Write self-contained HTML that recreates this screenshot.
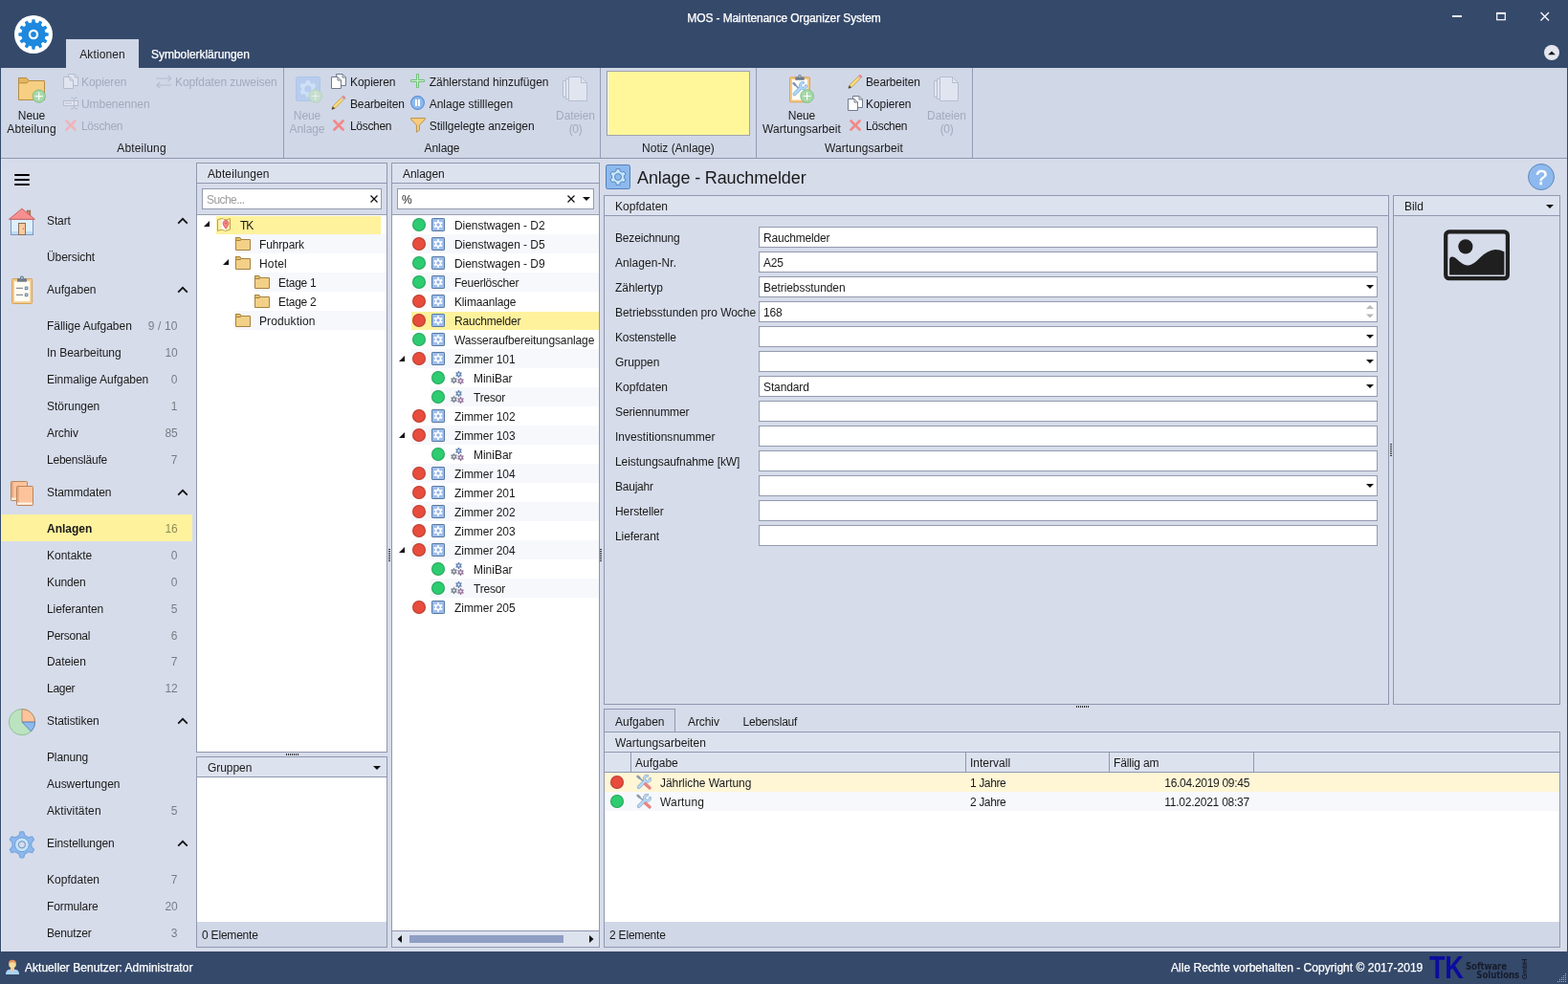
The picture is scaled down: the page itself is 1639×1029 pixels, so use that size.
<!DOCTYPE html>
<html lang="de"><head><meta charset="utf-8"><title>MOS - Maintenance Organizer System</title>
<style>
html,body{margin:0;padding:0;}
body{width:1639px;height:1029px;overflow:hidden;position:relative;background:#35496A;font-family:"Liberation Sans",sans-serif;font-size:12px;line-height:18px;color:#1a1a1a;}
.b{position:absolute;display:block;line-height:0;}
.bb{box-sizing:border-box;}
.t{position:absolute;white-space:nowrap;}
.w{color:#fff;-webkit-text-stroke:0.25px #fff;}
.d{width:14px;height:14px;border-radius:50%;box-shadow:inset 0 0 0 1px rgba(0,0,0,.2);}
svg{display:block;}
#w{position:absolute;left:0;top:0;width:1639px;height:1029px;will-change:transform;}
</style></head><body><div id="w">
<div class="t w" style="left:718.3px;top:10px;letter-spacing:-0.11px;">MOS - Maintenance Organizer System</div>
<div class="b" style="left:15px;top:16px;"><svg width="40" height="40" viewBox="0 0 40 40"><circle cx="20" cy="20" r="20" fill="#fff"/><path d="M32.5,18.1L35.7,18.5L35.7,21.5L32.5,21.9L31.7,24.6L34.4,26.5L32.8,29.2L29.8,27.9L27.9,29.8L29.2,32.8L26.5,34.4L24.6,31.7L21.9,32.5L21.5,35.7L18.5,35.7L18.1,32.5L15.4,31.7L13.5,34.4L10.8,32.8L12.1,29.8L10.2,27.9L7.2,29.2L5.6,26.5L8.3,24.6L7.5,21.9L4.3,21.5L4.3,18.5L7.5,18.1L8.3,15.4L5.6,13.5L7.2,10.8L10.2,12.1L12.1,10.2L10.8,7.2L13.5,5.6L15.4,8.3L18.1,7.5L18.5,4.3L21.5,4.3L21.9,7.5L24.6,8.3L26.5,5.6L29.2,7.2L27.9,10.2L29.8,12.1L32.8,10.8L34.4,13.5L31.7,15.4Z" fill="#1E88DE"/><circle cx="20" cy="20" r="5.2" fill="#fff"/><circle cx="20" cy="20" r="2.9" fill="#1E88DE"/></svg></div>
<svg class="b" style="left:1500px;top:0" width="139" height="36" viewBox="0 0 139 36"><path d="M18,17 H28" stroke="#fff" stroke-width="1.8"/><rect x="64.7" y="13.9" width="8.6" height="6.8" fill="none" stroke="#fff" stroke-width="1.2"/><path d="M64.1,13.8 H73.9" stroke="#fff" stroke-width="1.8"/><path d="M110.5,13 L119,21.5 M119,13 L110.5,21.5" stroke="#fff" stroke-width="1.3"/></svg>
<svg class="b" style="left:1614px;top:47px" width="16" height="16" viewBox="0 0 16 16"><circle cx="8" cy="8" r="8" fill="#E4E7EF"/><path d="M4.2,10.2 L8,6.4 L11.8,10.2Z" fill="#111"/></svg>
<div class="b" style="left:69px;top:41px;width:76px;height:31px;background:#D0D7E7;"></div>
<div class="t" style="left:83.23px;top:48px;letter-spacing:0.11px;">Aktionen</div>
<div class="t w" style="left:158.12px;top:48px;letter-spacing:-0.04px;">Symbolerklärungen</div>
<div class="b" style="left:1px;top:71px;width:1637px;height:94px;background:#D0D7E7;"></div>
<div class="b" style="left:1px;top:165px;width:1637px;height:1px;background:#8F98B1;"></div>
<div class="b" style="left:296px;top:71px;width:1px;height:94px;background:#939CB6;"></div>
<div class="b" style="left:627px;top:71px;width:1px;height:94px;background:#939CB6;"></div>
<div class="b" style="left:790px;top:71px;width:1px;height:94px;background:#939CB6;"></div>
<div class="b" style="left:1016px;top:71px;width:1px;height:94px;background:#939CB6;"></div>
<div class="b" style="left:19px;top:81px;"><svg width="30" height="28" viewBox="0 0 30 28"><path d="M0.5,0.5 H8.5 L11.5,3.5 H27.5 V23.5 H0.5Z" fill="#F6CF82" stroke="#B58C44" stroke-width="1" stroke-linejoin="round"/><path d="M0.5,0.5 H8.5 L11.5,3.5 L9,5.8 H0.5Z" fill="#E6B55E" stroke="#B58C44" stroke-width="1" stroke-linejoin="round"/><circle cx="21.7" cy="19.6" r="6.6" fill="#A8D8AB" stroke="#7CC283" stroke-width="1"/><path d="M17.7,19.6 H25.7 M21.7,15.600000000000001 V23.6" stroke="#fff" stroke-width="1.2" fill="none"/></svg></div>
<div class="t" style="left:18.85px;top:112px;letter-spacing:-0.10px;">Neue</div>
<div class="t" style="left:7.22px;top:126px;letter-spacing:0.17px;">Abteilung</div>
<div class="b" style="left:66px;top:77px;"><svg width="16" height="16" viewBox="0 0 16 16"><path d="M5.5,0.5 H12 L15.5,4 V12.5 H5.5Z" fill="#E1E5F0" stroke="#B4BCCF" stroke-width="1" stroke-linejoin="round"/><path d="M12,0.5 V4 H15.5" fill="none" stroke="#B4BCCF" stroke-width="1" stroke-linejoin="round"/><path d="M0.5,3.5 H7 L10.5,7 V15.5 H0.5Z" fill="#E1E5F0" stroke="#B4BCCF" stroke-width="1" stroke-linejoin="round"/><path d="M7,3.5 V7 H10.5" fill="none" stroke="#B4BCCF" stroke-width="1" stroke-linejoin="round"/></svg></div>
<div class="t" style="left:85px;top:77px;color:#A2AABD;letter-spacing:-0.07px;">Kopieren</div>
<div class="b" style="left:66px;top:101px;"><svg width="16" height="14" viewBox="0 0 16 14"><rect x="0.5" y="4.5" width="15" height="5" fill="#E1E5F0" stroke="#B4BCCF"/><rect x="2" y="6" width="7" height="2" fill="#CDD3E2"/><path d="M8,1 Q11.5,1 11.5,3 Q11.5,1 15,1 M8,13 Q11.5,13 11.5,11 Q11.5,13 15,13 M11.5,2.5 V11.5" stroke="#B4BCCF" fill="none" stroke-width="1"/></svg></div>
<div class="t" style="left:85px;top:100px;color:#A2AABD;letter-spacing:-0.05px;">Umbenennen</div>
<div class="b" style="left:68px;top:125px;"><svg width="12" height="12" viewBox="0 0 12 12"><path d="M1.5,1.5 L10.5,10.5 M10.5,1.5 L1.5,10.5" stroke="#F0B4BA" stroke-width="2.6" stroke-linecap="round" fill="none"/></svg></div>
<div class="t" style="left:85px;top:123px;color:#A2AABD;letter-spacing:-0.32px;">Löschen</div>
<div class="b" style="left:163px;top:78px;"><svg width="17" height="15" viewBox="0 0 17 15"><path d="M0.5,4 H15.5 M12.5,0.8 L15.7,4 L12.5,7.2" stroke="#B4BCCF" fill="none" stroke-width="1.1"/><path d="M16,11 H1 M4,7.8 L0.8,11 L4,14.2" stroke="#B4BCCF" fill="none" stroke-width="1.1"/></svg></div>
<div class="t" style="left:183px;top:77px;color:#A2AABD;letter-spacing:-0.08px;">Kopfdaten zuweisen</div>
<div class="t" style="left:122.22px;top:146px;letter-spacing:0.17px;">Abteilung</div>
<div class="b" style="left:309px;top:80px;"><svg width="28" height="28" viewBox="0 0 28 28"><rect x="0.5" y="0.5" width="25" height="25" rx="1.5" fill="#B8CDEE" stroke="#AEC5EA"/><path d="M11.2,7.1L11.4,4.8L14.4,4.8L14.6,7.1L17,8.5L19.1,7.6L20.6,10.2L18.7,11.5L18.7,14.3L20.6,15.6L19.1,18.2L17,17.3L14.6,18.7L14.4,21L11.4,21L11.2,18.7L8.8,17.3L6.7,18.2L5.2,15.6L7.1,14.3L7.1,11.5L5.2,10.2L6.7,7.6L8.8,8.5Z" fill="#CFE0F6" stroke="#CFE0F6" stroke-width="1.2" stroke-linejoin="round"/><circle cx="12.9" cy="12.9" r="3.6" fill="#B8CDEE"/><circle cx="20.6" cy="20.5" r="6.8" fill="#C6DDCE" stroke="#B4D3BE" stroke-width="1"/><path d="M16.6,20.5 H24.6 M20.6,16.5 V24.5" stroke="#E4EFE8" stroke-width="1.2" fill="none"/></svg></div>
<div class="t" style="left:306.85px;top:112px;color:#A2AABD;letter-spacing:-0.10px;">Neue</div>
<div class="t" style="left:302.57px;top:126px;color:#A2AABD;letter-spacing:-0.08px;">Anlage</div>
<div class="b" style="left:346px;top:77px;"><svg width="16" height="16" viewBox="0 0 16 16"><path d="M5.5,0.5 H12 L15.5,4 V12.5 H5.5Z" fill="#fff" stroke="#6E7B8C" stroke-width="1" stroke-linejoin="round"/><path d="M12,0.5 V4 H15.5" fill="none" stroke="#6E7B8C" stroke-width="1" stroke-linejoin="round"/><path d="M0.5,3.5 H7 L10.5,7 V15.5 H0.5Z" fill="#fff" stroke="#6E7B8C" stroke-width="1" stroke-linejoin="round"/><path d="M7,3.5 V7 H10.5" fill="none" stroke="#6E7B8C" stroke-width="1" stroke-linejoin="round"/></svg></div>
<div class="t" style="left:366px;top:77px;letter-spacing:-0.07px;">Kopieren</div>
<div class="b" style="left:346px;top:100px;"><svg width="16" height="16" viewBox="0 0 16 16"><path d="M2.6,10.4 L10.4,2.6 L12.6,4.8 L4.8,12.6 L1,14.2Z" fill="#F7DC7C" stroke="#C7A24A" stroke-width="0.9" stroke-linejoin="round"/><path d="M10.4,2.6 L11.4,1.6 L13.6,3.8 L12.6,4.8Z" fill="#F3F0EA" stroke="#B9B4A8" stroke-width="0.7"/><path d="M11.4,1.6 L12.2,0.9 Q13.1,0.2 14,1.1 L14.2,1.3 Q15,2.2 14.3,3 L13.6,3.8Z" fill="#F49C9C" stroke="#D06C6C" stroke-width="0.8"/><path d="M1,14.2 L1.9,11.7 L3.6,13.4Z" fill="#4a3f35" stroke="#4a3f35" stroke-width="0.6" stroke-linejoin="round"/></svg></div>
<div class="t" style="left:366px;top:100px;letter-spacing:-0.13px;">Bearbeiten</div>
<div class="b" style="left:348px;top:125px;"><svg width="12" height="12" viewBox="0 0 12 12"><path d="M1.5,1.5 L10.5,10.5 M10.5,1.5 L1.5,10.5" stroke="#F28888" stroke-width="2.6" stroke-linecap="round" fill="none"/></svg></div>
<div class="t" style="left:366px;top:123px;letter-spacing:-0.32px;">Löschen</div>
<div class="b" style="left:429px;top:77px;"><svg width="15" height="15" viewBox="0 0 15 15"><path d="M6.5,0.5 H8.5 V6.5 H14.5 V8.5 H8.5 V14.5 H6.5 V8.5 H0.5 V6.5 H6.5Z" fill="#CDEFCF" stroke="#6FC176" stroke-width="1" stroke-linejoin="miter"/></svg></div>
<div class="t" style="left:448.7px;top:77px;letter-spacing:-0.03px;">Zählerstand hinzufügen</div>
<div class="b" style="left:429px;top:100px;"><svg width="15" height="15" viewBox="0 0 15 15"><circle cx="7.5" cy="7.5" r="6.9" fill="#8DB9EE" stroke="#5B8FD6" stroke-width="1.1"/><rect x="5" y="4" width="2" height="7" fill="#fff"/><rect x="8" y="4" width="2" height="7" fill="#fff"/></svg></div>
<div class="t" style="left:448.7px;top:100px;letter-spacing:-0.00px;">Anlage stilllegen</div>
<div class="b" style="left:429px;top:123px;"><svg width="16" height="16" viewBox="0 0 16 16"><path d="M0.6,0.6 H15.4 V1.8 L9.4,7.8 V13 L6.4,15.3 V7.8 L0.6,1.8Z" fill="#F9CC7A" stroke="#B9924C" stroke-width="1" stroke-linejoin="round"/></svg></div>
<div class="t" style="left:448.7px;top:123px;letter-spacing:-0.04px;">Stillgelegte anzeigen</div>
<div class="b" style="left:588px;top:80px;"><svg width="26" height="26" viewBox="0 0 26 26"><path d="M0.5,4.5 H4 V21.5 H0.5Z" fill="#E1E5F0" stroke="#B7BED1" stroke-linejoin="round"/><path d="M3.5,2.5 H7 V23.5 H3.5Z" fill="#E1E5F0" stroke="#B7BED1" stroke-linejoin="round"/><path d="M6.5,0.5 H19.5 L25.5,6.5 V25.5 H6.5Z" fill="#E1E5F0" stroke="#B7BED1" stroke-linejoin="round"/><path d="M19.5,0.5 V6.5 H25.5" fill="none" stroke="#B7BED1" stroke-linejoin="round"/></svg></div>
<div class="t" style="left:581.09px;top:112px;color:#A2AABD;letter-spacing:-0.08px;">Dateien</div>
<div class="t" style="left:594.64px;top:126px;color:#A2AABD;letter-spacing:-0.32px;">(0)</div>
<div class="t" style="left:443.57px;top:146px;letter-spacing:-0.08px;">Anlage</div>
<div class="b" style="left:634px;top:74px;width:150px;height:68px;background:#FFF799;border:1px solid #A2A4AC;box-sizing:border-box;border-left-color:#9496A2;box-shadow:inset 1px 0 0 #fff;"></div>
<div class="t" style="left:671.1px;top:146px;letter-spacing:-0.02px;">Notiz (Anlage)</div>
<div class="b" style="left:825px;top:78px;"><svg width="27" height="30" viewBox="0 0 27 30"><rect x="0.5" y="2.8" width="21" height="26" rx="0.8" fill="#F4C887" stroke="#DDA458"/><rect x="3" y="5" width="16" height="21.5" fill="#FFFDF6"/><path d="M6.3,2.6 H15.7 V5.8 H6.3Z" fill="#6E7B8C"/><circle cx="11" cy="1.9" r="1.4" fill="#D2D9E9" stroke="#6E7B8C" stroke-width="1"/><path d="M5.4,10 L10,14.6" stroke="#7F97BC" stroke-width="1.6" stroke-linecap="round" fill="none"/><path d="M4.6,9.2 L6.2,10.8" stroke="#7F97BC" stroke-width="2.6" stroke-linecap="round"/><path d="M12.4,13.4 L5.4,20.4" stroke="#7FB1E3" stroke-width="3.8" stroke-linecap="round"/><path d="M14.4,8.6 A3,3 0 1 0 17.4,11.8" fill="none" stroke="#7FB1E3" stroke-width="3" stroke-linecap="round"/><path d="M12.4,13.4 L5.4,20.4" stroke="#B0D5F6" stroke-width="2.6" stroke-linecap="round"/><path d="M14.4,8.6 A3,3 0 1 0 17.4,11.8" fill="none" stroke="#B0D5F6" stroke-width="1.8" stroke-linecap="round"/><circle cx="18.6" cy="22.5" r="6.8" fill="#A8D8AB" stroke="#7CC283" stroke-width="1"/><path d="M14.600000000000001,22.5 H22.6 M18.6,18.5 V26.5" stroke="#fff" stroke-width="1.2" fill="none"/></svg></div>
<div class="t" style="left:823.85px;top:112px;letter-spacing:-0.10px;">Neue</div>
<div class="t" style="left:797.08px;top:126px;letter-spacing:0.07px;">Wartungsarbeit</div>
<div class="b" style="left:886px;top:78px;"><svg width="16" height="16" viewBox="0 0 16 16"><path d="M2.6,10.4 L10.4,2.6 L12.6,4.8 L4.8,12.6 L1,14.2Z" fill="#F7DC7C" stroke="#C7A24A" stroke-width="0.9" stroke-linejoin="round"/><path d="M10.4,2.6 L11.4,1.6 L13.6,3.8 L12.6,4.8Z" fill="#F3F0EA" stroke="#B9B4A8" stroke-width="0.7"/><path d="M11.4,1.6 L12.2,0.9 Q13.1,0.2 14,1.1 L14.2,1.3 Q15,2.2 14.3,3 L13.6,3.8Z" fill="#F49C9C" stroke="#D06C6C" stroke-width="0.8"/><path d="M1,14.2 L1.9,11.7 L3.6,13.4Z" fill="#4a3f35" stroke="#4a3f35" stroke-width="0.6" stroke-linejoin="round"/></svg></div>
<div class="t" style="left:905px;top:77px;letter-spacing:-0.13px;">Bearbeiten</div>
<div class="b" style="left:886px;top:100px;"><svg width="16" height="16" viewBox="0 0 16 16"><path d="M5.5,0.5 H12 L15.5,4 V12.5 H5.5Z" fill="#fff" stroke="#6E7B8C" stroke-width="1" stroke-linejoin="round"/><path d="M12,0.5 V4 H15.5" fill="none" stroke="#6E7B8C" stroke-width="1" stroke-linejoin="round"/><path d="M0.5,3.5 H7 L10.5,7 V15.5 H0.5Z" fill="#fff" stroke="#6E7B8C" stroke-width="1" stroke-linejoin="round"/><path d="M7,3.5 V7 H10.5" fill="none" stroke="#6E7B8C" stroke-width="1" stroke-linejoin="round"/></svg></div>
<div class="t" style="left:905px;top:100px;letter-spacing:-0.07px;">Kopieren</div>
<div class="b" style="left:888px;top:125px;"><svg width="12" height="12" viewBox="0 0 12 12"><path d="M1.5,1.5 L10.5,10.5 M10.5,1.5 L1.5,10.5" stroke="#F28888" stroke-width="2.6" stroke-linecap="round" fill="none"/></svg></div>
<div class="t" style="left:905px;top:123px;letter-spacing:-0.32px;">Löschen</div>
<div class="b" style="left:976px;top:80px;"><svg width="26" height="26" viewBox="0 0 26 26"><path d="M0.5,4.5 H4 V21.5 H0.5Z" fill="#E1E5F0" stroke="#B7BED1" stroke-linejoin="round"/><path d="M3.5,2.5 H7 V23.5 H3.5Z" fill="#E1E5F0" stroke="#B7BED1" stroke-linejoin="round"/><path d="M6.5,0.5 H19.5 L25.5,6.5 V25.5 H6.5Z" fill="#E1E5F0" stroke="#B7BED1" stroke-linejoin="round"/><path d="M19.5,0.5 V6.5 H25.5" fill="none" stroke="#B7BED1" stroke-linejoin="round"/></svg></div>
<div class="t" style="left:969.09px;top:112px;color:#A2AABD;letter-spacing:-0.08px;">Dateien</div>
<div class="t" style="left:982.64px;top:126px;color:#A2AABD;letter-spacing:-0.32px;">(0)</div>
<div class="t" style="left:862.08px;top:146px;letter-spacing:0.07px;">Wartungsarbeit</div>
<div class="b" style="left:1px;top:166px;width:1637px;height:829px;background:#D6DCEA;"></div>
<div class="b" style="left:1px;top:166px;width:1px;height:829px;background:#DDE6F5;"></div>
<svg class="b" style="left:15px;top:182px" width="16" height="12" viewBox="0 0 16 12"><path d="M1,1 H15 M1,6 H15 M1,11 H15" stroke="#000" stroke-width="2" stroke-linecap="round"/></svg>
<div class="b" style="left:8px;top:217px;"><svg width="30" height="30" viewBox="0 0 30 30"><rect x="20.3" y="3.2" width="3.4" height="6" fill="#C8845C" stroke="#8E5E42" stroke-width="0.8"/><rect x="3.5" y="12.5" width="23" height="16" fill="#DDEFFC" stroke="#7F97BC" stroke-width="1"/><rect x="4" y="25" width="22" height="3" fill="#BBDDF6"/><path d="M14.9,1.2 L1.4,12.3 H28.4Z" fill="#F78F8F" stroke="#C96464" stroke-width="1" stroke-linejoin="round"/><rect x="11.5" y="16.5" width="7" height="12" fill="#FCC9A0" stroke="#8E6E55" stroke-width="1"/><circle cx="16.4" cy="22.3" r="0.7" fill="#B08050"/></svg></div>
<div class="t" style="left:49px;top:222px;letter-spacing:-0.11px;">Start</div>
<svg class="b" style="left:185px;top:227px" width="12" height="8" viewBox="0 0 12 8"><path d="M1.2,6.6 L6,1.8 L10.8,6.6" stroke="#111" stroke-width="1.7" fill="none"/></svg>
<div class="t" style="left:49px;top:260px;letter-spacing:-0.06px;">Übersicht</div>
<div class="b" style="left:10.5px;top:288px;"><svg width="24" height="31" viewBox="0 0 24 31"><rect x="1.6" y="3.5" width="21" height="26" rx="1" fill="#F4CB8D" stroke="#D6A35C" stroke-width="1"/><rect x="4" y="6.2" width="16.2" height="21" fill="#FFFDF4"/><path d="M7,3.2 H16.9 V6.7 H7Z" fill="#6E7B8C"/><circle cx="11.9" cy="2.6" r="1.5" fill="#D6DCEA" stroke="#6E7B8C" stroke-width="1.1"/><path d="M6,13.4 H13 M6,20.4 H13" stroke="#8A8E96" stroke-width="1.1"/><rect x="15.3" y="12.1" width="2.6" height="2.6" fill="#C9DDF6" stroke="#5F7596" stroke-width="0.9"/><rect x="15.3" y="19.1" width="2.6" height="2.6" fill="#C9DDF6" stroke="#5F7596" stroke-width="0.9"/></svg></div>
<div class="t" style="left:49px;top:294px;letter-spacing:0.02px;">Aufgaben</div>
<svg class="b" style="left:185px;top:299px" width="12" height="8" viewBox="0 0 12 8"><path d="M1.2,6.6 L6,1.8 L10.8,6.6" stroke="#111" stroke-width="1.7" fill="none"/></svg>
<div class="t" style="left:49px;top:332px;letter-spacing:-0.04px;">Fällige Aufgaben</div>
<div class="t" style="left:154.84px;top:332px;color:rgba(0,0,0,.45);letter-spacing:0.11px;">9 / 10</div>
<div class="t" style="left:49px;top:360px;letter-spacing:-0.03px;">In Bearbeitung</div>
<div class="t" style="left:172.56px;top:360px;color:rgba(0,0,0,.45);letter-spacing:-0.21px;">10</div>
<div class="t" style="left:49px;top:388px;letter-spacing:-0.03px;">Einmalige Aufgaben</div>
<div class="t" style="left:178.83px;top:388px;color:rgba(0,0,0,.45);">0</div>
<div class="t" style="left:49px;top:416px;letter-spacing:-0.01px;">Störungen</div>
<div class="t" style="left:178.83px;top:416px;color:rgba(0,0,0,.45);">1</div>
<div class="t" style="left:49px;top:444px;letter-spacing:-0.08px;">Archiv</div>
<div class="t" style="left:172.56px;top:444px;color:rgba(0,0,0,.45);letter-spacing:-0.21px;">85</div>
<div class="t" style="left:49px;top:472px;letter-spacing:-0.22px;">Lebensläufe</div>
<div class="t" style="left:178.83px;top:472px;color:rgba(0,0,0,.45);">7</div>
<div class="b" style="left:11px;top:503px;"><svg width="24" height="26" viewBox="0 0 24 26"><rect x="0.5" y="0.5" width="17" height="20" rx="0.8" fill="#FDC49C" stroke="#B98660" stroke-width="1"/><rect x="1" y="1" width="2" height="17" fill="#EBAA80"/><rect x="1" y="17.6" width="16" height="2" fill="#FFF6EA"/><rect x="6.5" y="5.5" width="17" height="20" rx="0.8" fill="#FDC49C" stroke="#B98660" stroke-width="1"/><rect x="7" y="6" width="2" height="17" fill="#EBAA80"/><rect x="7" y="22.6" width="16" height="2" fill="#FFF6EA"/></svg></div>
<div class="t" style="left:49px;top:506px;letter-spacing:-0.06px;">Stammdaten</div>
<svg class="b" style="left:185px;top:511px" width="12" height="8" viewBox="0 0 12 8"><path d="M1.2,6.6 L6,1.8 L10.8,6.6" stroke="#111" stroke-width="1.7" fill="none"/></svg>
<div class="b" style="left:1px;top:538px;width:200px;height:28px;background:#FFF29D;"></div>
<div class="t" style="left:49px;top:544px;letter-spacing:0.00px;font-weight:bold;">Anlagen</div>
<div class="t" style="left:172.56px;top:544px;color:rgba(0,0,0,.45);letter-spacing:-0.21px;">16</div>
<div class="t" style="left:49px;top:572px;letter-spacing:-0.01px;">Kontakte</div>
<div class="t" style="left:178.83px;top:572px;color:rgba(0,0,0,.45);">0</div>
<div class="t" style="left:49px;top:600px;letter-spacing:-0.12px;">Kunden</div>
<div class="t" style="left:178.83px;top:600px;color:rgba(0,0,0,.45);">0</div>
<div class="t" style="left:49px;top:628px;letter-spacing:-0.09px;">Lieferanten</div>
<div class="t" style="left:178.83px;top:628px;color:rgba(0,0,0,.45);">5</div>
<div class="t" style="left:49px;top:656px;letter-spacing:-0.28px;">Personal</div>
<div class="t" style="left:178.83px;top:656px;color:rgba(0,0,0,.45);">6</div>
<div class="t" style="left:49px;top:683px;letter-spacing:-0.08px;">Dateien</div>
<div class="t" style="left:178.83px;top:683px;color:rgba(0,0,0,.45);">7</div>
<div class="t" style="left:49px;top:711px;letter-spacing:-0.29px;">Lager</div>
<div class="t" style="left:172.56px;top:711px;color:rgba(0,0,0,.45);letter-spacing:-0.21px;">12</div>
<div class="b" style="left:8px;top:740px;"><svg width="30" height="30" viewBox="0 0 30 30"><circle cx="15" cy="15.1" r="13.6" fill="#BCE3BF" stroke="#8FC097" stroke-width="1"/><path d="M15,15.1 V1.5 A13.6,13.6 0 0 1 28.6,15.1Z" fill="#FDC49C" stroke="#B38C6C" stroke-width="1" stroke-linejoin="round"/><path d="M15,15.1 H28.6 A13.6,13.6 0 0 1 24.45,24.88Z" fill="#8DB9EE" stroke="#5F88BC" stroke-width="1" stroke-linejoin="round"/></svg></div>
<div class="t" style="left:49px;top:745px;letter-spacing:-0.07px;">Statistiken</div>
<svg class="b" style="left:185px;top:750px" width="12" height="8" viewBox="0 0 12 8"><path d="M1.2,6.6 L6,1.8 L10.8,6.6" stroke="#111" stroke-width="1.7" fill="none"/></svg>
<div class="t" style="left:49px;top:783px;letter-spacing:-0.13px;">Planung</div>
<div class="t" style="left:49px;top:811px;letter-spacing:-0.02px;">Auswertungen</div>
<div class="t" style="left:49px;top:839px;letter-spacing:0.12px;">Aktivitäten</div>
<div class="t" style="left:178.83px;top:839px;color:rgba(0,0,0,.45);">5</div>
<div class="b" style="left:8px;top:868px;"><svg width="30" height="31" viewBox="0 0 30 31"><path d="M11.9,5.7L13.1,1.8L16.7,1.8L17.9,5.7L21.8,7.9L25.7,7L27.5,10.1L24.8,13.1L24.8,17.5L27.5,20.5L25.7,23.6L21.8,22.7L17.9,24.9L16.7,28.8L13.1,28.8L11.9,24.9L8,22.7L4.1,23.6L2.3,20.5L5,17.5L5,13.1L2.3,10.1L4.1,7L8,7.9Z" fill="#8DB9EE" stroke="#7CA6DE" stroke-width="1.3" stroke-linejoin="round"/><circle cx="14.9" cy="15.3" r="7.4" fill="#C4E4FB" stroke="#6F9BD6" stroke-width="1"/><circle cx="14.9" cy="15.3" r="3.6" fill="#D6DCEA" stroke="#6C8FBF" stroke-width="1"/></svg></div>
<div class="t" style="left:49px;top:873px;letter-spacing:-0.11px;">Einstellungen</div>
<svg class="b" style="left:185px;top:878px" width="12" height="8" viewBox="0 0 12 8"><path d="M1.2,6.6 L6,1.8 L10.8,6.6" stroke="#111" stroke-width="1.7" fill="none"/></svg>
<div class="t" style="left:49px;top:911px;letter-spacing:0.04px;">Kopfdaten</div>
<div class="t" style="left:178.83px;top:911px;color:rgba(0,0,0,.45);">7</div>
<div class="t" style="left:49px;top:939px;letter-spacing:-0.12px;">Formulare</div>
<div class="t" style="left:172.56px;top:939px;color:rgba(0,0,0,.45);letter-spacing:-0.21px;">20</div>
<div class="t" style="left:49px;top:967px;letter-spacing:-0.17px;">Benutzer</div>
<div class="t" style="left:178.83px;top:967px;color:rgba(0,0,0,.45);">3</div>
<div class="b bb" style="left:205px;top:170px;width:200px;height:617px;background:#D6DCEA;border:1px solid #8F98AF;"></div>
<div class="b bb" style="left:205px;top:170px;width:200px;height:22px;background:#DDE2EF;border:1px solid #8F98AF;"></div>
<div class="t" style="left:217px;top:172.5px;letter-spacing:0.11px;">Abteilungen</div>
<div class="b bb" style="left:211px;top:197px;width:188px;height:22px;background:#fff;border:1px solid #949BAF;"></div>
<div class="t" style="left:216px;top:199.5px;color:#9c9c9c;letter-spacing:-0.56px;">Suche...</div>
<svg class="b" style="left:387px;top:204px" width="8" height="8" viewBox="0 0 8 8"><path d="M0.5,0.5 L7.5,7.5 M7.5,0.5 L0.5,7.5" stroke="#111" stroke-width="1.3" fill="none"/></svg>
<div class="b" style="left:206px;top:224px;width:198px;height:1px;background:#9AA0AE;"></div>
<div class="b" style="left:206px;top:225px;width:198px;height:561px;background:#fff;"></div>
<div class="b" style="left:226px;top:226px;width:172px;height:19px;background:#FFF29D;"></div>
<svg class="b" style="left:213px;top:231px" width="6" height="6" viewBox="0 0 6 6"><path d="M6,0 V6 H0Z" fill="#111"/></svg>
<div class="b" style="left:227px;top:228px;"><svg width="14" height="14" viewBox="0 0 14 14"><path d="M0.5,1.8 L4.5,0.6 L9.3,1.8 L13.5,0.6 V12 L9.3,13.4 L4.5,12.2 L0.5,13.4Z" fill="#FCEFB4" stroke="#BFA044" stroke-width="1" stroke-linejoin="round"/><path d="M4.8,1.3 L9,2.3 V12.8 L4.8,11.8Z" fill="#fff"/><path d="M9,2.6 C7.2,2.6 6.1,3.9 6.1,5.4 C6.1,7.4 9,11.2 9,11.2 C9,11.2 11.9,7.4 11.9,5.4 C11.9,3.9 10.8,2.6 9,2.6Z" fill="#F68B8B" stroke="#DB5252" stroke-width="0.9"/><circle cx="9" cy="5.4" r="0.9" fill="#DB5252"/></svg></div>
<div class="t" style="left:251px;top:227px;letter-spacing:-1.04px;">TK</div>
<div class="b" style="left:246px;top:245px;width:158px;height:20px;background:#F7F8FC;"></div>
<div class="b" style="left:246px;top:248px;"><svg width="16" height="14" viewBox="0 0 16 14"><path d="M0.5,0.5 H4.8 L6.3,2.5 H15.5 V13.5 H0.5Z" fill="#F3D088" stroke="#A48240" stroke-width="1" stroke-linejoin="round"/><path d="M0.5,0.5 H4.8 L6.3,2.5 L5,3.5 H0.5Z" fill="#E4BC68" stroke="#A48240" stroke-width="1" stroke-linejoin="round"/></svg></div>
<div class="t" style="left:271px;top:247px;letter-spacing:-0.14px;">Fuhrpark</div>
<svg class="b" style="left:233px;top:271px" width="6" height="6" viewBox="0 0 6 6"><path d="M6,0 V6 H0Z" fill="#111"/></svg>
<div class="b" style="left:246px;top:268px;"><svg width="16" height="14" viewBox="0 0 16 14"><path d="M0.5,0.5 H4.8 L6.3,2.5 H15.5 V13.5 H0.5Z" fill="#F3D088" stroke="#A48240" stroke-width="1" stroke-linejoin="round"/><path d="M0.5,0.5 H4.8 L6.3,2.5 L5,3.5 H0.5Z" fill="#E4BC68" stroke="#A48240" stroke-width="1" stroke-linejoin="round"/></svg></div>
<div class="t" style="left:271px;top:267px;letter-spacing:0.16px;">Hotel</div>
<div class="b" style="left:266px;top:285px;width:138px;height:20px;background:#F7F8FC;"></div>
<div class="b" style="left:266px;top:288px;"><svg width="16" height="14" viewBox="0 0 16 14"><path d="M0.5,0.5 H4.8 L6.3,2.5 H15.5 V13.5 H0.5Z" fill="#F3D088" stroke="#A48240" stroke-width="1" stroke-linejoin="round"/><path d="M0.5,0.5 H4.8 L6.3,2.5 L5,3.5 H0.5Z" fill="#E4BC68" stroke="#A48240" stroke-width="1" stroke-linejoin="round"/></svg></div>
<div class="t" style="left:291px;top:287px;letter-spacing:-0.29px;">Etage 1</div>
<div class="b" style="left:266px;top:308px;"><svg width="16" height="14" viewBox="0 0 16 14"><path d="M0.5,0.5 H4.8 L6.3,2.5 H15.5 V13.5 H0.5Z" fill="#F3D088" stroke="#A48240" stroke-width="1" stroke-linejoin="round"/><path d="M0.5,0.5 H4.8 L6.3,2.5 L5,3.5 H0.5Z" fill="#E4BC68" stroke="#A48240" stroke-width="1" stroke-linejoin="round"/></svg></div>
<div class="t" style="left:291px;top:307px;letter-spacing:-0.29px;">Etage 2</div>
<div class="b" style="left:246px;top:325px;width:158px;height:20px;background:#F7F8FC;"></div>
<div class="b" style="left:246px;top:328px;"><svg width="16" height="14" viewBox="0 0 16 14"><path d="M0.5,0.5 H4.8 L6.3,2.5 H15.5 V13.5 H0.5Z" fill="#F3D088" stroke="#A48240" stroke-width="1" stroke-linejoin="round"/><path d="M0.5,0.5 H4.8 L6.3,2.5 L5,3.5 H0.5Z" fill="#E4BC68" stroke="#A48240" stroke-width="1" stroke-linejoin="round"/></svg></div>
<div class="t" style="left:271px;top:327px;letter-spacing:0.11px;">Produktion</div>
<svg class="b" style="left:299px;top:788px" width="14" height="3" viewBox="0 0 14 3"><rect x="0" y="0" width="1" height="2" fill="#333"/><rect x="2" y="0" width="1" height="2" fill="#333"/><rect x="4" y="0" width="1" height="2" fill="#333"/><rect x="6" y="0" width="1" height="2" fill="#333"/><rect x="8" y="0" width="1" height="2" fill="#333"/><rect x="10" y="0" width="1" height="2" fill="#333"/><rect x="12" y="0" width="1" height="2" fill="#333"/></svg>
<div class="b bb" style="left:205px;top:791px;width:200px;height:200px;background:#D6DCEA;border:1px solid #8F98AF;"></div>
<div class="b bb" style="left:205px;top:791px;width:200px;height:22px;background:#DDE2EF;border:1px solid #8F98AF;"></div>
<div class="t" style="left:217px;top:793.5px;letter-spacing:-0.05px;">Gruppen</div>
<svg class="b" style="left:390px;top:801px" width="8" height="4" viewBox="0 0 8 4"><path d="M0,0 H8 L4.0,4Z" fill="#111"/></svg>
<div class="b" style="left:206px;top:813px;width:198px;height:151px;background:#fff;"></div>
<div class="b" style="left:206px;top:964px;width:198px;height:26px;background:#D0D7E7;"></div>
<div class="t" style="left:211px;top:968.5px;letter-spacing:-0.20px;">0 Elemente</div>
<svg class="b" style="left:406px;top:574px" width="3" height="14" viewBox="0 0 3 14"><rect x="0" y="0" width="2" height="1" fill="#333"/><rect x="0" y="2" width="2" height="1" fill="#333"/><rect x="0" y="4" width="2" height="1" fill="#333"/><rect x="0" y="6" width="2" height="1" fill="#333"/><rect x="0" y="8" width="2" height="1" fill="#333"/><rect x="0" y="10" width="2" height="1" fill="#333"/><rect x="0" y="12" width="2" height="1" fill="#333"/></svg>
<div class="b bb" style="left:409px;top:170px;width:218px;height:821px;background:#D6DCEA;border:1px solid #8F98AF;"></div>
<div class="b bb" style="left:409px;top:170px;width:218px;height:22px;background:#DDE2EF;border:1px solid #8F98AF;"></div>
<div class="t" style="left:421px;top:172.5px;letter-spacing:-0.06px;">Anlagen</div>
<div class="b bb" style="left:415px;top:197px;width:206px;height:22px;background:#fff;border:1px solid #949BAF;"></div>
<div class="t" style="left:420px;top:199.5px;">%</div>
<svg class="b" style="left:593px;top:204px" width="8" height="8" viewBox="0 0 8 8"><path d="M0.5,0.5 L7.5,7.5 M7.5,0.5 L0.5,7.5" stroke="#111" stroke-width="1.3" fill="none"/></svg>
<svg class="b" style="left:609px;top:206px" width="8" height="4" viewBox="0 0 8 4"><path d="M0,0 H8 L4.0,4Z" fill="#111"/></svg>
<div class="b" style="left:410px;top:224px;width:216px;height:1px;background:#9AA0AE;"></div>
<div class="b" style="left:410px;top:225px;width:216px;height:748px;background:#fff;"></div>
<div class="b d" style="left:431px;top:228px;background:#2ECC71"></div>
<div class="b" style="left:451px;top:228px;"><svg width="14" height="14" viewBox="0 0 14 14"><rect x="0.5" y="0.5" width="13" height="13" rx="0.6" fill="#9DBDEB" stroke="#587AA3"/><path d="M6,3.9L6,2.2L8,2.2L8,3.9L9.2,4.5L10.6,3.7L11.7,5.5L10.2,6.3L10.2,7.7L11.7,8.5L10.6,10.3L9.2,9.5L8,10.1L8,11.8L6,11.8L6,10.1L4.8,9.5L3.4,10.3L2.3,8.5L3.8,7.7L3.8,6.3L2.3,5.5L3.4,3.7L4.8,4.5Z" fill="#fff"/><circle cx="7" cy="7" r="1.7" fill="#8FB2E2"/></svg></div>
<div class="t" style="left:475px;top:227px;letter-spacing:-0.05px;">Dienstwagen - D2</div>
<div class="b" style="left:430px;top:245px;width:196px;height:20px;background:#F7F8FC;"></div>
<div class="b d" style="left:431px;top:248px;background:#E74C3C"></div>
<div class="b" style="left:451px;top:248px;"><svg width="14" height="14" viewBox="0 0 14 14"><rect x="0.5" y="0.5" width="13" height="13" rx="0.6" fill="#9DBDEB" stroke="#587AA3"/><path d="M6,3.9L6,2.2L8,2.2L8,3.9L9.2,4.5L10.6,3.7L11.7,5.5L10.2,6.3L10.2,7.7L11.7,8.5L10.6,10.3L9.2,9.5L8,10.1L8,11.8L6,11.8L6,10.1L4.8,9.5L3.4,10.3L2.3,8.5L3.8,7.7L3.8,6.3L2.3,5.5L3.4,3.7L4.8,4.5Z" fill="#fff"/><circle cx="7" cy="7" r="1.7" fill="#8FB2E2"/></svg></div>
<div class="t" style="left:475px;top:247px;letter-spacing:-0.05px;">Dienstwagen - D5</div>
<div class="b d" style="left:431px;top:268px;background:#2ECC71"></div>
<div class="b" style="left:451px;top:268px;"><svg width="14" height="14" viewBox="0 0 14 14"><rect x="0.5" y="0.5" width="13" height="13" rx="0.6" fill="#9DBDEB" stroke="#587AA3"/><path d="M6,3.9L6,2.2L8,2.2L8,3.9L9.2,4.5L10.6,3.7L11.7,5.5L10.2,6.3L10.2,7.7L11.7,8.5L10.6,10.3L9.2,9.5L8,10.1L8,11.8L6,11.8L6,10.1L4.8,9.5L3.4,10.3L2.3,8.5L3.8,7.7L3.8,6.3L2.3,5.5L3.4,3.7L4.8,4.5Z" fill="#fff"/><circle cx="7" cy="7" r="1.7" fill="#8FB2E2"/></svg></div>
<div class="t" style="left:475px;top:267px;letter-spacing:-0.05px;">Dienstwagen - D9</div>
<div class="b" style="left:430px;top:285px;width:196px;height:20px;background:#F7F8FC;"></div>
<div class="b d" style="left:431px;top:288px;background:#2ECC71"></div>
<div class="b" style="left:451px;top:288px;"><svg width="14" height="14" viewBox="0 0 14 14"><rect x="0.5" y="0.5" width="13" height="13" rx="0.6" fill="#9DBDEB" stroke="#587AA3"/><path d="M6,3.9L6,2.2L8,2.2L8,3.9L9.2,4.5L10.6,3.7L11.7,5.5L10.2,6.3L10.2,7.7L11.7,8.5L10.6,10.3L9.2,9.5L8,10.1L8,11.8L6,11.8L6,10.1L4.8,9.5L3.4,10.3L2.3,8.5L3.8,7.7L3.8,6.3L2.3,5.5L3.4,3.7L4.8,4.5Z" fill="#fff"/><circle cx="7" cy="7" r="1.7" fill="#8FB2E2"/></svg></div>
<div class="t" style="left:475px;top:287px;letter-spacing:-0.24px;">Feuerlöscher</div>
<div class="b d" style="left:431px;top:308px;background:#E74C3C"></div>
<div class="b" style="left:451px;top:308px;"><svg width="14" height="14" viewBox="0 0 14 14"><rect x="0.5" y="0.5" width="13" height="13" rx="0.6" fill="#9DBDEB" stroke="#587AA3"/><path d="M6,3.9L6,2.2L8,2.2L8,3.9L9.2,4.5L10.6,3.7L11.7,5.5L10.2,6.3L10.2,7.7L11.7,8.5L10.6,10.3L9.2,9.5L8,10.1L8,11.8L6,11.8L6,10.1L4.8,9.5L3.4,10.3L2.3,8.5L3.8,7.7L3.8,6.3L2.3,5.5L3.4,3.7L4.8,4.5Z" fill="#fff"/><circle cx="7" cy="7" r="1.7" fill="#8FB2E2"/></svg></div>
<div class="t" style="left:475px;top:307px;letter-spacing:-0.15px;">Klimaanlage</div>
<div class="b" style="left:430px;top:326px;width:196px;height:19px;background:#FFF29D;"></div>
<div class="b d" style="left:431px;top:328px;background:#E74C3C"></div>
<div class="b" style="left:451px;top:328px;"><svg width="14" height="14" viewBox="0 0 14 14"><rect x="0.5" y="0.5" width="13" height="13" rx="0.6" fill="#9DBDEB" stroke="#587AA3"/><path d="M6,3.9L6,2.2L8,2.2L8,3.9L9.2,4.5L10.6,3.7L11.7,5.5L10.2,6.3L10.2,7.7L11.7,8.5L10.6,10.3L9.2,9.5L8,10.1L8,11.8L6,11.8L6,10.1L4.8,9.5L3.4,10.3L2.3,8.5L3.8,7.7L3.8,6.3L2.3,5.5L3.4,3.7L4.8,4.5Z" fill="#fff"/><circle cx="7" cy="7" r="1.7" fill="#8FB2E2"/></svg></div>
<div class="t" style="left:475px;top:327px;letter-spacing:-0.18px;">Rauchmelder</div>
<div class="b d" style="left:431px;top:348px;background:#2ECC71"></div>
<div class="b" style="left:451px;top:348px;"><svg width="14" height="14" viewBox="0 0 14 14"><rect x="0.5" y="0.5" width="13" height="13" rx="0.6" fill="#9DBDEB" stroke="#587AA3"/><path d="M6,3.9L6,2.2L8,2.2L8,3.9L9.2,4.5L10.6,3.7L11.7,5.5L10.2,6.3L10.2,7.7L11.7,8.5L10.6,10.3L9.2,9.5L8,10.1L8,11.8L6,11.8L6,10.1L4.8,9.5L3.4,10.3L2.3,8.5L3.8,7.7L3.8,6.3L2.3,5.5L3.4,3.7L4.8,4.5Z" fill="#fff"/><circle cx="7" cy="7" r="1.7" fill="#8FB2E2"/></svg></div>
<div class="t" style="left:475px;top:347px;letter-spacing:-0.11px;">Wasseraufbereitungsanlage</div>
<div class="b" style="left:430px;top:365px;width:196px;height:20px;background:#F7F8FC;"></div>
<svg class="b" style="left:417px;top:372px" width="6" height="6" viewBox="0 0 6 6"><path d="M6,0 V6 H0Z" fill="#111"/></svg>
<div class="b d" style="left:431px;top:368px;background:#E74C3C"></div>
<div class="b" style="left:451px;top:368px;"><svg width="14" height="14" viewBox="0 0 14 14"><rect x="0.5" y="0.5" width="13" height="13" rx="0.6" fill="#9DBDEB" stroke="#587AA3"/><path d="M6,3.9L6,2.2L8,2.2L8,3.9L9.2,4.5L10.6,3.7L11.7,5.5L10.2,6.3L10.2,7.7L11.7,8.5L10.6,10.3L9.2,9.5L8,10.1L8,11.8L6,11.8L6,10.1L4.8,9.5L3.4,10.3L2.3,8.5L3.8,7.7L3.8,6.3L2.3,5.5L3.4,3.7L4.8,4.5Z" fill="#fff"/><circle cx="7" cy="7" r="1.7" fill="#8FB2E2"/></svg></div>
<div class="t" style="left:475px;top:367px;letter-spacing:-0.05px;">Zimmer 101</div>
<div class="b d" style="left:451px;top:388px;background:#2ECC71"></div>
<div class="b" style="left:471px;top:388px;"><svg width="15" height="14" viewBox="0 0 15 14"><path d="M7.7,1.4L8.1,0.1L8.9,0.1L9.3,1.4L9.9,1.7L11.3,1.5L11.6,2.1L10.8,3.1L10.8,3.9L11.6,4.9L11.3,5.5L9.9,5.3L9.3,5.6L8.9,6.9L8.1,6.9L7.7,5.6L7.1,5.3L5.7,5.5L5.4,4.9L6.2,3.9L6.2,3.1L5.4,2.1L5.7,1.5L7.1,1.7Z" fill="#5E7FAE" stroke="#5E7FAE" stroke-width="0.3" stroke-linejoin="round"/><circle cx="8.5" cy="3.5" r="1.15" fill="#E3F1FD"/><path d="M2.7,7.5L3.1,6.2L3.9,6.2L4.3,7.5L4.9,7.8L6.3,7.6L6.6,8.2L5.8,9.2L5.8,10L6.6,11L6.3,11.6L4.9,11.4L4.3,11.7L3.9,13L3.1,13L2.7,11.7L2.1,11.4L0.7,11.6L0.4,11L1.2,10L1.2,9.2L0.4,8.2L0.7,7.6L2.1,7.8Z" fill="#76828F" stroke="#76828F" stroke-width="0.3" stroke-linejoin="round"/><circle cx="3.5" cy="9.6" r="1.15" fill="#EEF5FA"/><path d="M9.7,8.4L10.1,7.1L10.9,7.1L11.3,8.4L11.9,8.7L13.3,8.5L13.6,9.1L12.8,10.1L12.8,10.9L13.6,11.9L13.3,12.5L11.9,12.3L11.3,12.6L10.9,13.9L10.1,13.9L9.7,12.6L9.1,12.3L7.7,12.5L7.4,11.9L8.2,10.9L8.2,10.1L7.4,9.1L7.7,8.5L9.1,8.7Z" fill="#8E7097" stroke="#8E7097" stroke-width="0.3" stroke-linejoin="round"/><circle cx="10.5" cy="10.5" r="1.15" fill="#F8EAFB"/></svg></div>
<div class="t" style="left:495px;top:387px;letter-spacing:-0.02px;">MiniBar</div>
<div class="b" style="left:450px;top:405px;width:176px;height:20px;background:#F7F8FC;"></div>
<div class="b d" style="left:451px;top:408px;background:#2ECC71"></div>
<div class="b" style="left:471px;top:408px;"><svg width="15" height="14" viewBox="0 0 15 14"><path d="M7.7,1.4L8.1,0.1L8.9,0.1L9.3,1.4L9.9,1.7L11.3,1.5L11.6,2.1L10.8,3.1L10.8,3.9L11.6,4.9L11.3,5.5L9.9,5.3L9.3,5.6L8.9,6.9L8.1,6.9L7.7,5.6L7.1,5.3L5.7,5.5L5.4,4.9L6.2,3.9L6.2,3.1L5.4,2.1L5.7,1.5L7.1,1.7Z" fill="#5E7FAE" stroke="#5E7FAE" stroke-width="0.3" stroke-linejoin="round"/><circle cx="8.5" cy="3.5" r="1.15" fill="#E3F1FD"/><path d="M2.7,7.5L3.1,6.2L3.9,6.2L4.3,7.5L4.9,7.8L6.3,7.6L6.6,8.2L5.8,9.2L5.8,10L6.6,11L6.3,11.6L4.9,11.4L4.3,11.7L3.9,13L3.1,13L2.7,11.7L2.1,11.4L0.7,11.6L0.4,11L1.2,10L1.2,9.2L0.4,8.2L0.7,7.6L2.1,7.8Z" fill="#76828F" stroke="#76828F" stroke-width="0.3" stroke-linejoin="round"/><circle cx="3.5" cy="9.6" r="1.15" fill="#EEF5FA"/><path d="M9.7,8.4L10.1,7.1L10.9,7.1L11.3,8.4L11.9,8.7L13.3,8.5L13.6,9.1L12.8,10.1L12.8,10.9L13.6,11.9L13.3,12.5L11.9,12.3L11.3,12.6L10.9,13.9L10.1,13.9L9.7,12.6L9.1,12.3L7.7,12.5L7.4,11.9L8.2,10.9L8.2,10.1L7.4,9.1L7.7,8.5L9.1,8.7Z" fill="#8E7097" stroke="#8E7097" stroke-width="0.3" stroke-linejoin="round"/><circle cx="10.5" cy="10.5" r="1.15" fill="#F8EAFB"/></svg></div>
<div class="t" style="left:495px;top:407px;letter-spacing:-0.20px;">Tresor</div>
<div class="b d" style="left:431px;top:428px;background:#E74C3C"></div>
<div class="b" style="left:451px;top:428px;"><svg width="14" height="14" viewBox="0 0 14 14"><rect x="0.5" y="0.5" width="13" height="13" rx="0.6" fill="#9DBDEB" stroke="#587AA3"/><path d="M6,3.9L6,2.2L8,2.2L8,3.9L9.2,4.5L10.6,3.7L11.7,5.5L10.2,6.3L10.2,7.7L11.7,8.5L10.6,10.3L9.2,9.5L8,10.1L8,11.8L6,11.8L6,10.1L4.8,9.5L3.4,10.3L2.3,8.5L3.8,7.7L3.8,6.3L2.3,5.5L3.4,3.7L4.8,4.5Z" fill="#fff"/><circle cx="7" cy="7" r="1.7" fill="#8FB2E2"/></svg></div>
<div class="t" style="left:475px;top:427px;letter-spacing:-0.05px;">Zimmer 102</div>
<div class="b" style="left:430px;top:445px;width:196px;height:20px;background:#F7F8FC;"></div>
<svg class="b" style="left:417px;top:452px" width="6" height="6" viewBox="0 0 6 6"><path d="M6,0 V6 H0Z" fill="#111"/></svg>
<div class="b d" style="left:431px;top:448px;background:#E74C3C"></div>
<div class="b" style="left:451px;top:448px;"><svg width="14" height="14" viewBox="0 0 14 14"><rect x="0.5" y="0.5" width="13" height="13" rx="0.6" fill="#9DBDEB" stroke="#587AA3"/><path d="M6,3.9L6,2.2L8,2.2L8,3.9L9.2,4.5L10.6,3.7L11.7,5.5L10.2,6.3L10.2,7.7L11.7,8.5L10.6,10.3L9.2,9.5L8,10.1L8,11.8L6,11.8L6,10.1L4.8,9.5L3.4,10.3L2.3,8.5L3.8,7.7L3.8,6.3L2.3,5.5L3.4,3.7L4.8,4.5Z" fill="#fff"/><circle cx="7" cy="7" r="1.7" fill="#8FB2E2"/></svg></div>
<div class="t" style="left:475px;top:447px;letter-spacing:-0.05px;">Zimmer 103</div>
<div class="b d" style="left:451px;top:468px;background:#2ECC71"></div>
<div class="b" style="left:471px;top:468px;"><svg width="15" height="14" viewBox="0 0 15 14"><path d="M7.7,1.4L8.1,0.1L8.9,0.1L9.3,1.4L9.9,1.7L11.3,1.5L11.6,2.1L10.8,3.1L10.8,3.9L11.6,4.9L11.3,5.5L9.9,5.3L9.3,5.6L8.9,6.9L8.1,6.9L7.7,5.6L7.1,5.3L5.7,5.5L5.4,4.9L6.2,3.9L6.2,3.1L5.4,2.1L5.7,1.5L7.1,1.7Z" fill="#5E7FAE" stroke="#5E7FAE" stroke-width="0.3" stroke-linejoin="round"/><circle cx="8.5" cy="3.5" r="1.15" fill="#E3F1FD"/><path d="M2.7,7.5L3.1,6.2L3.9,6.2L4.3,7.5L4.9,7.8L6.3,7.6L6.6,8.2L5.8,9.2L5.8,10L6.6,11L6.3,11.6L4.9,11.4L4.3,11.7L3.9,13L3.1,13L2.7,11.7L2.1,11.4L0.7,11.6L0.4,11L1.2,10L1.2,9.2L0.4,8.2L0.7,7.6L2.1,7.8Z" fill="#76828F" stroke="#76828F" stroke-width="0.3" stroke-linejoin="round"/><circle cx="3.5" cy="9.6" r="1.15" fill="#EEF5FA"/><path d="M9.7,8.4L10.1,7.1L10.9,7.1L11.3,8.4L11.9,8.7L13.3,8.5L13.6,9.1L12.8,10.1L12.8,10.9L13.6,11.9L13.3,12.5L11.9,12.3L11.3,12.6L10.9,13.9L10.1,13.9L9.7,12.6L9.1,12.3L7.7,12.5L7.4,11.9L8.2,10.9L8.2,10.1L7.4,9.1L7.7,8.5L9.1,8.7Z" fill="#8E7097" stroke="#8E7097" stroke-width="0.3" stroke-linejoin="round"/><circle cx="10.5" cy="10.5" r="1.15" fill="#F8EAFB"/></svg></div>
<div class="t" style="left:495px;top:467px;letter-spacing:-0.02px;">MiniBar</div>
<div class="b" style="left:430px;top:485px;width:196px;height:20px;background:#F7F8FC;"></div>
<div class="b d" style="left:431px;top:488px;background:#E74C3C"></div>
<div class="b" style="left:451px;top:488px;"><svg width="14" height="14" viewBox="0 0 14 14"><rect x="0.5" y="0.5" width="13" height="13" rx="0.6" fill="#9DBDEB" stroke="#587AA3"/><path d="M6,3.9L6,2.2L8,2.2L8,3.9L9.2,4.5L10.6,3.7L11.7,5.5L10.2,6.3L10.2,7.7L11.7,8.5L10.6,10.3L9.2,9.5L8,10.1L8,11.8L6,11.8L6,10.1L4.8,9.5L3.4,10.3L2.3,8.5L3.8,7.7L3.8,6.3L2.3,5.5L3.4,3.7L4.8,4.5Z" fill="#fff"/><circle cx="7" cy="7" r="1.7" fill="#8FB2E2"/></svg></div>
<div class="t" style="left:475px;top:487px;letter-spacing:-0.05px;">Zimmer 104</div>
<div class="b d" style="left:431px;top:508px;background:#E74C3C"></div>
<div class="b" style="left:451px;top:508px;"><svg width="14" height="14" viewBox="0 0 14 14"><rect x="0.5" y="0.5" width="13" height="13" rx="0.6" fill="#9DBDEB" stroke="#587AA3"/><path d="M6,3.9L6,2.2L8,2.2L8,3.9L9.2,4.5L10.6,3.7L11.7,5.5L10.2,6.3L10.2,7.7L11.7,8.5L10.6,10.3L9.2,9.5L8,10.1L8,11.8L6,11.8L6,10.1L4.8,9.5L3.4,10.3L2.3,8.5L3.8,7.7L3.8,6.3L2.3,5.5L3.4,3.7L4.8,4.5Z" fill="#fff"/><circle cx="7" cy="7" r="1.7" fill="#8FB2E2"/></svg></div>
<div class="t" style="left:475px;top:507px;letter-spacing:-0.05px;">Zimmer 201</div>
<div class="b" style="left:430px;top:525px;width:196px;height:20px;background:#F7F8FC;"></div>
<div class="b d" style="left:431px;top:528px;background:#E74C3C"></div>
<div class="b" style="left:451px;top:528px;"><svg width="14" height="14" viewBox="0 0 14 14"><rect x="0.5" y="0.5" width="13" height="13" rx="0.6" fill="#9DBDEB" stroke="#587AA3"/><path d="M6,3.9L6,2.2L8,2.2L8,3.9L9.2,4.5L10.6,3.7L11.7,5.5L10.2,6.3L10.2,7.7L11.7,8.5L10.6,10.3L9.2,9.5L8,10.1L8,11.8L6,11.8L6,10.1L4.8,9.5L3.4,10.3L2.3,8.5L3.8,7.7L3.8,6.3L2.3,5.5L3.4,3.7L4.8,4.5Z" fill="#fff"/><circle cx="7" cy="7" r="1.7" fill="#8FB2E2"/></svg></div>
<div class="t" style="left:475px;top:527px;letter-spacing:-0.05px;">Zimmer 202</div>
<div class="b d" style="left:431px;top:548px;background:#E74C3C"></div>
<div class="b" style="left:451px;top:548px;"><svg width="14" height="14" viewBox="0 0 14 14"><rect x="0.5" y="0.5" width="13" height="13" rx="0.6" fill="#9DBDEB" stroke="#587AA3"/><path d="M6,3.9L6,2.2L8,2.2L8,3.9L9.2,4.5L10.6,3.7L11.7,5.5L10.2,6.3L10.2,7.7L11.7,8.5L10.6,10.3L9.2,9.5L8,10.1L8,11.8L6,11.8L6,10.1L4.8,9.5L3.4,10.3L2.3,8.5L3.8,7.7L3.8,6.3L2.3,5.5L3.4,3.7L4.8,4.5Z" fill="#fff"/><circle cx="7" cy="7" r="1.7" fill="#8FB2E2"/></svg></div>
<div class="t" style="left:475px;top:547px;letter-spacing:-0.05px;">Zimmer 203</div>
<div class="b" style="left:430px;top:565px;width:196px;height:20px;background:#F7F8FC;"></div>
<svg class="b" style="left:417px;top:572px" width="6" height="6" viewBox="0 0 6 6"><path d="M6,0 V6 H0Z" fill="#111"/></svg>
<div class="b d" style="left:431px;top:568px;background:#E74C3C"></div>
<div class="b" style="left:451px;top:568px;"><svg width="14" height="14" viewBox="0 0 14 14"><rect x="0.5" y="0.5" width="13" height="13" rx="0.6" fill="#9DBDEB" stroke="#587AA3"/><path d="M6,3.9L6,2.2L8,2.2L8,3.9L9.2,4.5L10.6,3.7L11.7,5.5L10.2,6.3L10.2,7.7L11.7,8.5L10.6,10.3L9.2,9.5L8,10.1L8,11.8L6,11.8L6,10.1L4.8,9.5L3.4,10.3L2.3,8.5L3.8,7.7L3.8,6.3L2.3,5.5L3.4,3.7L4.8,4.5Z" fill="#fff"/><circle cx="7" cy="7" r="1.7" fill="#8FB2E2"/></svg></div>
<div class="t" style="left:475px;top:567px;letter-spacing:-0.05px;">Zimmer 204</div>
<div class="b d" style="left:451px;top:588px;background:#2ECC71"></div>
<div class="b" style="left:471px;top:588px;"><svg width="15" height="14" viewBox="0 0 15 14"><path d="M7.7,1.4L8.1,0.1L8.9,0.1L9.3,1.4L9.9,1.7L11.3,1.5L11.6,2.1L10.8,3.1L10.8,3.9L11.6,4.9L11.3,5.5L9.9,5.3L9.3,5.6L8.9,6.9L8.1,6.9L7.7,5.6L7.1,5.3L5.7,5.5L5.4,4.9L6.2,3.9L6.2,3.1L5.4,2.1L5.7,1.5L7.1,1.7Z" fill="#5E7FAE" stroke="#5E7FAE" stroke-width="0.3" stroke-linejoin="round"/><circle cx="8.5" cy="3.5" r="1.15" fill="#E3F1FD"/><path d="M2.7,7.5L3.1,6.2L3.9,6.2L4.3,7.5L4.9,7.8L6.3,7.6L6.6,8.2L5.8,9.2L5.8,10L6.6,11L6.3,11.6L4.9,11.4L4.3,11.7L3.9,13L3.1,13L2.7,11.7L2.1,11.4L0.7,11.6L0.4,11L1.2,10L1.2,9.2L0.4,8.2L0.7,7.6L2.1,7.8Z" fill="#76828F" stroke="#76828F" stroke-width="0.3" stroke-linejoin="round"/><circle cx="3.5" cy="9.6" r="1.15" fill="#EEF5FA"/><path d="M9.7,8.4L10.1,7.1L10.9,7.1L11.3,8.4L11.9,8.7L13.3,8.5L13.6,9.1L12.8,10.1L12.8,10.9L13.6,11.9L13.3,12.5L11.9,12.3L11.3,12.6L10.9,13.9L10.1,13.9L9.7,12.6L9.1,12.3L7.7,12.5L7.4,11.9L8.2,10.9L8.2,10.1L7.4,9.1L7.7,8.5L9.1,8.7Z" fill="#8E7097" stroke="#8E7097" stroke-width="0.3" stroke-linejoin="round"/><circle cx="10.5" cy="10.5" r="1.15" fill="#F8EAFB"/></svg></div>
<div class="t" style="left:495px;top:587px;letter-spacing:-0.02px;">MiniBar</div>
<div class="b" style="left:450px;top:605px;width:176px;height:20px;background:#F7F8FC;"></div>
<div class="b d" style="left:451px;top:608px;background:#2ECC71"></div>
<div class="b" style="left:471px;top:608px;"><svg width="15" height="14" viewBox="0 0 15 14"><path d="M7.7,1.4L8.1,0.1L8.9,0.1L9.3,1.4L9.9,1.7L11.3,1.5L11.6,2.1L10.8,3.1L10.8,3.9L11.6,4.9L11.3,5.5L9.9,5.3L9.3,5.6L8.9,6.9L8.1,6.9L7.7,5.6L7.1,5.3L5.7,5.5L5.4,4.9L6.2,3.9L6.2,3.1L5.4,2.1L5.7,1.5L7.1,1.7Z" fill="#5E7FAE" stroke="#5E7FAE" stroke-width="0.3" stroke-linejoin="round"/><circle cx="8.5" cy="3.5" r="1.15" fill="#E3F1FD"/><path d="M2.7,7.5L3.1,6.2L3.9,6.2L4.3,7.5L4.9,7.8L6.3,7.6L6.6,8.2L5.8,9.2L5.8,10L6.6,11L6.3,11.6L4.9,11.4L4.3,11.7L3.9,13L3.1,13L2.7,11.7L2.1,11.4L0.7,11.6L0.4,11L1.2,10L1.2,9.2L0.4,8.2L0.7,7.6L2.1,7.8Z" fill="#76828F" stroke="#76828F" stroke-width="0.3" stroke-linejoin="round"/><circle cx="3.5" cy="9.6" r="1.15" fill="#EEF5FA"/><path d="M9.7,8.4L10.1,7.1L10.9,7.1L11.3,8.4L11.9,8.7L13.3,8.5L13.6,9.1L12.8,10.1L12.8,10.9L13.6,11.9L13.3,12.5L11.9,12.3L11.3,12.6L10.9,13.9L10.1,13.9L9.7,12.6L9.1,12.3L7.7,12.5L7.4,11.9L8.2,10.9L8.2,10.1L7.4,9.1L7.7,8.5L9.1,8.7Z" fill="#8E7097" stroke="#8E7097" stroke-width="0.3" stroke-linejoin="round"/><circle cx="10.5" cy="10.5" r="1.15" fill="#F8EAFB"/></svg></div>
<div class="t" style="left:495px;top:607px;letter-spacing:-0.20px;">Tresor</div>
<div class="b d" style="left:431px;top:628px;background:#E74C3C"></div>
<div class="b" style="left:451px;top:628px;"><svg width="14" height="14" viewBox="0 0 14 14"><rect x="0.5" y="0.5" width="13" height="13" rx="0.6" fill="#9DBDEB" stroke="#587AA3"/><path d="M6,3.9L6,2.2L8,2.2L8,3.9L9.2,4.5L10.6,3.7L11.7,5.5L10.2,6.3L10.2,7.7L11.7,8.5L10.6,10.3L9.2,9.5L8,10.1L8,11.8L6,11.8L6,10.1L4.8,9.5L3.4,10.3L2.3,8.5L3.8,7.7L3.8,6.3L2.3,5.5L3.4,3.7L4.8,4.5Z" fill="#fff"/><circle cx="7" cy="7" r="1.7" fill="#8FB2E2"/></svg></div>
<div class="t" style="left:475px;top:627px;letter-spacing:-0.05px;">Zimmer 205</div>
<div class="b" style="left:410px;top:973px;width:216px;height:17px;background:#DDE2EF;"></div>
<div class="b" style="left:410px;top:973px;width:216px;height:1px;background:#8F98AF;"></div>
<div class="b" style="left:428px;top:978px;width:161px;height:8px;background:#8F9FC3;"></div>
<svg class="b" style="left:415px;top:977px" width="6" height="10" viewBox="0 0 6 10"><path d="M5,1 V9 L0.5,5Z" fill="#111"/></svg>
<svg class="b" style="left:615px;top:977px" width="6" height="10" viewBox="0 0 6 10"><path d="M1,1 V9 L5.5,5Z" fill="#111"/></svg>
<svg class="b" style="left:627px;top:574px" width="3" height="14" viewBox="0 0 3 14"><rect x="0" y="0" width="2" height="1" fill="#333"/><rect x="0" y="2" width="2" height="1" fill="#333"/><rect x="0" y="4" width="2" height="1" fill="#333"/><rect x="0" y="6" width="2" height="1" fill="#333"/><rect x="0" y="8" width="2" height="1" fill="#333"/><rect x="0" y="10" width="2" height="1" fill="#333"/><rect x="0" y="12" width="2" height="1" fill="#333"/></svg>
<div class="b" style="left:633px;top:172px;"><svg width="26" height="26" viewBox="0 0 26 26"><rect x="0.5" y="0.5" width="25" height="25" rx="1.8" fill="#8DB9EE" stroke="#5580B8"/><path d="M11,6.8L11.1,4.7L14.9,4.7L15,6.8L17.3,8.2L19.2,7.2L21.1,10.5L19.4,11.6L19.4,14.4L21.1,15.5L19.2,18.8L17.3,17.8L15,19.2L14.9,21.3L11.1,21.3L11,19.2L8.7,17.8L6.8,18.8L4.9,15.5L6.6,14.4L6.6,11.6L4.9,10.5L6.8,7.2L8.7,8.2Z" fill="#C6E7FC" stroke="#5580B8" stroke-width="0.9" stroke-linejoin="round"/><circle cx="13" cy="13" r="3.5" fill="#8DB9EE" stroke="#5580B8" stroke-width="0.9"/></svg></div>
<div class="t" style="left:666px;top:172.5px;font-size:18px;line-height:27px;letter-spacing:-0.13px;">Anlage - Rauchmelder</div>
<div class="b" style="left:1597px;top:171px;"><svg width="28" height="28" viewBox="0 0 28 28"><circle cx="14" cy="14" r="13.5" fill="#8DB9EE" stroke="#6288C0" stroke-width="1"/><text x="14" y="22.1" text-anchor="middle" font-family="Liberation Sans, sans-serif" font-size="22" fill="#fff" stroke="#fff" stroke-width="0.5">?</text></svg></div>
<div class="b bb" style="left:631px;top:204px;width:821px;height:533px;background:#D6DCEA;border:1px solid #8F98AF;"></div>
<div class="b bb" style="left:631px;top:204px;width:821px;height:22px;background:#DDE2EF;border:1px solid #8F98AF;"></div>
<div class="t" style="left:643px;top:206.5px;letter-spacing:0.04px;">Kopfdaten</div>
<div class="t" style="left:643px;top:240px;letter-spacing:-0.17px;">Bezeichnung</div>
<div class="b bb" style="left:793px;top:237px;width:647px;height:22px;background:#fff;border:1px solid #949BAF;"></div>
<div class="t" style="left:798px;top:240px;letter-spacing:-0.18px;">Rauchmelder</div>
<div class="t" style="left:643px;top:266px;letter-spacing:0.07px;">Anlagen-Nr.</div>
<div class="b bb" style="left:793px;top:263px;width:647px;height:22px;background:#fff;border:1px solid #949BAF;"></div>
<div class="t" style="left:798px;top:266px;letter-spacing:-0.22px;">A25</div>
<div class="t" style="left:643px;top:292px;letter-spacing:-0.00px;">Zählertyp</div>
<div class="b bb" style="left:793px;top:289px;width:647px;height:22px;background:#fff;border:1px solid #949BAF;"></div>
<div class="t" style="left:798px;top:292px;letter-spacing:-0.08px;">Betriebsstunden</div>
<svg class="b" style="left:1428px;top:298px" width="8" height="4" viewBox="0 0 8 4"><path d="M0,0 H8 L4.0,4Z" fill="#111"/></svg>
<div class="t" style="left:643px;top:318px;letter-spacing:-0.03px;">Betriebsstunden pro Woche</div>
<div class="b bb" style="left:793px;top:315px;width:647px;height:22px;background:#fff;border:1px solid #949BAF;"></div>
<div class="t" style="left:798px;top:318px;letter-spacing:-0.21px;">168</div>
<svg class="b" style="left:1428px;top:317px" width="8" height="16" viewBox="0 0 8 16"><path d="M0,6 L4,2 L8,6Z M0,11.6 L4,15.6 L8,11.6Z" fill="#B9B9B9"/></svg>
<div class="t" style="left:643px;top:344px;letter-spacing:-0.14px;">Kostenstelle</div>
<div class="b bb" style="left:793px;top:341px;width:647px;height:22px;background:#fff;border:1px solid #949BAF;"></div>
<svg class="b" style="left:1428px;top:350px" width="8" height="4" viewBox="0 0 8 4"><path d="M0,0 H8 L4.0,4Z" fill="#111"/></svg>
<div class="t" style="left:643px;top:370px;letter-spacing:-0.05px;">Gruppen</div>
<div class="b bb" style="left:793px;top:367px;width:647px;height:22px;background:#fff;border:1px solid #949BAF;"></div>
<svg class="b" style="left:1428px;top:376px" width="8" height="4" viewBox="0 0 8 4"><path d="M0,0 H8 L4.0,4Z" fill="#111"/></svg>
<div class="t" style="left:643px;top:396px;letter-spacing:0.04px;">Kopfdaten</div>
<div class="b bb" style="left:793px;top:393px;width:647px;height:22px;background:#fff;border:1px solid #949BAF;"></div>
<div class="t" style="left:798px;top:396px;letter-spacing:-0.12px;">Standard</div>
<svg class="b" style="left:1428px;top:402px" width="8" height="4" viewBox="0 0 8 4"><path d="M0,0 H8 L4.0,4Z" fill="#111"/></svg>
<div class="t" style="left:643px;top:422px;letter-spacing:-0.11px;">Seriennummer</div>
<div class="b bb" style="left:793px;top:419px;width:647px;height:22px;background:#fff;border:1px solid #949BAF;"></div>
<div class="t" style="left:643px;top:448px;letter-spacing:0.03px;">Investitionsnummer</div>
<div class="b bb" style="left:793px;top:445px;width:647px;height:22px;background:#fff;border:1px solid #949BAF;"></div>
<div class="t" style="left:643px;top:474px;letter-spacing:-0.08px;">Leistungsaufnahme [kW]</div>
<div class="b bb" style="left:793px;top:471px;width:647px;height:22px;background:#fff;border:1px solid #949BAF;"></div>
<div class="t" style="left:643px;top:500px;letter-spacing:-0.23px;">Baujahr</div>
<div class="b bb" style="left:793px;top:497px;width:647px;height:22px;background:#fff;border:1px solid #949BAF;"></div>
<svg class="b" style="left:1428px;top:506px" width="8" height="4" viewBox="0 0 8 4"><path d="M0,0 H8 L4.0,4Z" fill="#111"/></svg>
<div class="t" style="left:643px;top:526px;letter-spacing:-0.07px;">Hersteller</div>
<div class="b bb" style="left:793px;top:523px;width:647px;height:22px;background:#fff;border:1px solid #949BAF;"></div>
<div class="t" style="left:643px;top:552px;letter-spacing:-0.08px;">Lieferant</div>
<div class="b bb" style="left:793px;top:549px;width:647px;height:22px;background:#fff;border:1px solid #949BAF;"></div>
<svg class="b" style="left:1453px;top:464px" width="3" height="14" viewBox="0 0 3 14"><rect x="0" y="0" width="2" height="1" fill="#333"/><rect x="0" y="2" width="2" height="1" fill="#333"/><rect x="0" y="4" width="2" height="1" fill="#333"/><rect x="0" y="6" width="2" height="1" fill="#333"/><rect x="0" y="8" width="2" height="1" fill="#333"/><rect x="0" y="10" width="2" height="1" fill="#333"/><rect x="0" y="12" width="2" height="1" fill="#333"/></svg>
<div class="b bb" style="left:1456px;top:204px;width:175px;height:533px;background:#D6DCEA;border:1px solid #8F98AF;"></div>
<div class="b bb" style="left:1456px;top:204px;width:175px;height:22px;background:#DDE2EF;border:1px solid #8F98AF;"></div>
<div class="t" style="left:1468px;top:206.5px;letter-spacing:-0.07px;">Bild</div>
<svg class="b" style="left:1616px;top:214px" width="8" height="4" viewBox="0 0 8 4"><path d="M0,0 H8 L4.0,4Z" fill="#111"/></svg>
<div class="b" style="left:1509px;top:239.5px;"><svg width="69" height="54" viewBox="0 0 69 54"><rect x="2.2" y="2.4" width="64.7" height="48.8" rx="3.6" fill="#D6DCEA" stroke="#1f1f1f" stroke-width="4.2"/><circle cx="22.9" cy="17.8" r="7.6" fill="#1f1f1f"/><path d="M6.1,47.6 V31 Q6.5,28.3 9.5,28.6 Q12,29 16,33 Q22,38 26,37.5 Q31,37 38,29.5 Q46,21.5 54,21 Q59,21 63.4,23.3 V47.6Z" fill="#1f1f1f"/></svg></div>
<svg class="b" style="left:1125px;top:738px" width="14" height="3" viewBox="0 0 14 3"><rect x="0" y="0" width="1" height="2" fill="#333"/><rect x="2" y="0" width="1" height="2" fill="#333"/><rect x="4" y="0" width="1" height="2" fill="#333"/><rect x="6" y="0" width="1" height="2" fill="#333"/><rect x="8" y="0" width="1" height="2" fill="#333"/><rect x="10" y="0" width="1" height="2" fill="#333"/><rect x="12" y="0" width="1" height="2" fill="#333"/></svg>
<div class="b bb" style="left:631px;top:741px;width:75px;height:25px;background:#D3D9E8;border:1px solid #8F98AF;border-bottom:none;"></div>
<div class="t" style="left:643px;top:746px;letter-spacing:0.02px;">Aufgaben</div>
<div class="t" style="left:719px;top:746px;letter-spacing:-0.08px;">Archiv</div>
<div class="t" style="left:776.5px;top:746px;letter-spacing:-0.20px;">Lebenslauf</div>
<div class="b bb" style="left:631px;top:765px;width:1000px;height:226px;background:#fff;border:1px solid #8F98AF;"></div>
<div class="b" style="left:632px;top:766px;width:998px;height:20px;background:#DDE2EF;"></div>
<div class="t" style="left:643px;top:768px;letter-spacing:0.04px;">Wartungsarbeiten</div>
<div class="b" style="left:632px;top:786px;width:998px;height:1px;background:#8F98AF;"></div>
<div class="b" style="left:632px;top:787px;width:998px;height:20px;background:#DDE2EF;"></div>
<div class="b" style="left:632px;top:807px;width:998px;height:1px;background:#8F98AF;"></div>
<div class="b" style="left:659px;top:787px;width:1px;height:20px;background:#8F98AF;"></div>
<div class="b" style="left:1009px;top:787px;width:1px;height:20px;background:#8F98AF;"></div>
<div class="b" style="left:1159px;top:787px;width:1px;height:20px;background:#8F98AF;"></div>
<div class="b" style="left:1310px;top:787px;width:1px;height:20px;background:#8F98AF;"></div>
<div class="t" style="left:664px;top:789px;letter-spacing:0.01px;">Aufgabe</div>
<div class="t" style="left:1014px;top:789px;letter-spacing:0.01px;">Intervall</div>
<div class="t" style="left:1164px;top:789px;letter-spacing:-0.14px;">Fällig am</div>
<div class="b" style="left:632px;top:808px;width:998px;height:20px;background:#FFF6D6;"></div>
<div class="b" style="left:632px;top:828px;width:998px;height:20px;background:#F7F8FC;"></div>
<div class="b d" style="left:638px;top:811px;background:#E74C3C"></div>
<div class="b" style="left:665px;top:810px;"><svg width="16" height="16" viewBox="0 0 16 16"><path d="M2.9,3 L7.2,7" stroke="#8695A6" stroke-width="1.5" stroke-linecap="round"/><path d="M1.7,1.9 L3.3,3.5" stroke="#8F9CA8" stroke-width="2.7" stroke-linecap="round"/><path d="M9.4,6.6 L2.7,13.2" stroke="#8FAACA" stroke-width="3.8" stroke-linecap="round"/><path d="M11.7,1.3 A3.1,3.1 0 1 0 14.6,4.6" fill="none" stroke="#8FAACA" stroke-width="3" stroke-linecap="round"/><path d="M9.4,6.6 L2.7,13.2" stroke="#B6D8F5" stroke-width="2.6" stroke-linecap="round"/><path d="M11.7,1.3 A3.1,3.1 0 1 0 14.6,4.6" fill="none" stroke="#B6D8F5" stroke-width="1.8" stroke-linecap="round"/><path d="M9.7,10 L14.1,14" stroke="#E87C7C" stroke-width="3.2" stroke-linecap="round"/><path d="M10.2,9.2 L8.9,10.6 M11.6,10.5 L10.3,11.9 M13,11.8 L11.7,13.2 M14.4,13.1 L13.1,14.5" stroke="#F3A9A9" stroke-width="0.6"/></svg></div>
<div class="t" style="left:690px;top:810px;letter-spacing:-0.06px;">Jährliche Wartung</div>
<div class="t" style="left:1014px;top:810px;letter-spacing:-0.38px;">1 Jahre</div>
<div class="t" style="left:1217.28px;top:810px;letter-spacing:-0.29px;">16.04.2019 09:45</div>
<div class="b d" style="left:638px;top:831px;background:#2ECC71"></div>
<div class="b" style="left:665px;top:830px;"><svg width="16" height="16" viewBox="0 0 16 16"><path d="M2.9,3 L7.2,7" stroke="#8695A6" stroke-width="1.5" stroke-linecap="round"/><path d="M1.7,1.9 L3.3,3.5" stroke="#8F9CA8" stroke-width="2.7" stroke-linecap="round"/><path d="M9.4,6.6 L2.7,13.2" stroke="#8FAACA" stroke-width="3.8" stroke-linecap="round"/><path d="M11.7,1.3 A3.1,3.1 0 1 0 14.6,4.6" fill="none" stroke="#8FAACA" stroke-width="3" stroke-linecap="round"/><path d="M9.4,6.6 L2.7,13.2" stroke="#B6D8F5" stroke-width="2.6" stroke-linecap="round"/><path d="M11.7,1.3 A3.1,3.1 0 1 0 14.6,4.6" fill="none" stroke="#B6D8F5" stroke-width="1.8" stroke-linecap="round"/><path d="M9.7,10 L14.1,14" stroke="#E87C7C" stroke-width="3.2" stroke-linecap="round"/><path d="M10.2,9.2 L8.9,10.6 M11.6,10.5 L10.3,11.9 M13,11.8 L11.7,13.2 M14.4,13.1 L13.1,14.5" stroke="#F3A9A9" stroke-width="0.6"/></svg></div>
<div class="t" style="left:690px;top:830px;letter-spacing:0.18px;">Wartung</div>
<div class="t" style="left:1014px;top:830px;letter-spacing:-0.38px;">2 Jahre</div>
<div class="t" style="left:1217.28px;top:830px;letter-spacing:-0.24px;">11.02.2021 08:37</div>
<div class="b" style="left:632px;top:964px;width:998px;height:26px;background:#D0D7E7;"></div>
<div class="t" style="left:637px;top:968.5px;letter-spacing:-0.20px;">2 Elemente</div>
<div class="b" style="left:5px;top:1003px;"><svg width="16" height="16" viewBox="0 0 16 16"><path d="M1,16 Q1,11.5 5,10.8 H11 Q15,11.5 15,16Z" fill="#A9D4F5"/><path d="M6,9 H10 V11.5 L8,13.5 L6,11.5Z" fill="#F6C9A0"/><circle cx="8" cy="5.5" r="3.8" fill="#F7DB98"/><path d="M4,5 Q4,0.8 8,0.8 Q12,0.8 12,5 Q10,2.8 8,3.2 Q6,2.8 4,5Z" fill="#E9955C"/></svg></div>
<div class="t w" style="left:26px;top:1003px;letter-spacing:0.02px;">Aktueller Benutzer: Administrator</div>
<div class="t w" style="left:1224px;top:1003px;letter-spacing:0.02px;">Alle Rechte vorbehalten - Copyright © 2017-2019</div>
<div class="t" style="left:1493.5px;top:992.2px;font-size:34px;line-height:38px;color:#0B0BA0;font-weight:bold;transform:scaleX(0.8);transform-origin:0 0;letter-spacing:-0.5px">TK</div>
<div class="t" style="left:1532px;top:1004.6px;font-family:'DejaVu Sans Condensed','DejaVu Sans',sans-serif;font-weight:bold;font-size:9.6px;line-height:12px;letter-spacing:-0.12px;color:#161c2c">Software</div>
<div class="t" style="left:1543.3px;top:1014.4px;font-family:'DejaVu Sans Condensed','DejaVu Sans',sans-serif;font-weight:bold;font-size:9.6px;line-height:12px;letter-spacing:-0.08px;color:#161c2c">Solutions</div>
<div class="t" style="left:1581px;top:1008.5px;font-size:7.5px;line-height:9px;color:#161c2c;font-weight:bold;transform:rotate(-90deg);width:24px;text-align:center;letter-spacing:-0.2px">GmbH</div>
<svg class="b" style="left:1627px;top:1017px" width="11" height="11" viewBox="0 0 11 11"><rect x="9" y="1" width="1" height="1" fill="#A9B3C8"/><rect x="7" y="3" width="1" height="1" fill="#A9B3C8"/><rect x="9" y="3" width="1" height="1" fill="#A9B3C8"/><rect x="5" y="5" width="1" height="1" fill="#A9B3C8"/><rect x="7" y="5" width="1" height="1" fill="#A9B3C8"/><rect x="9" y="5" width="1" height="1" fill="#A9B3C8"/><rect x="3" y="7" width="1" height="1" fill="#A9B3C8"/><rect x="5" y="7" width="1" height="1" fill="#A9B3C8"/><rect x="7" y="7" width="1" height="1" fill="#A9B3C8"/><rect x="9" y="7" width="1" height="1" fill="#A9B3C8"/><rect x="1" y="9" width="1" height="1" fill="#A9B3C8"/><rect x="3" y="9" width="1" height="1" fill="#A9B3C8"/><rect x="5" y="9" width="1" height="1" fill="#A9B3C8"/><rect x="7" y="9" width="1" height="1" fill="#A9B3C8"/><rect x="9" y="9" width="1" height="1" fill="#A9B3C8"/></svg>
</div></body></html>
